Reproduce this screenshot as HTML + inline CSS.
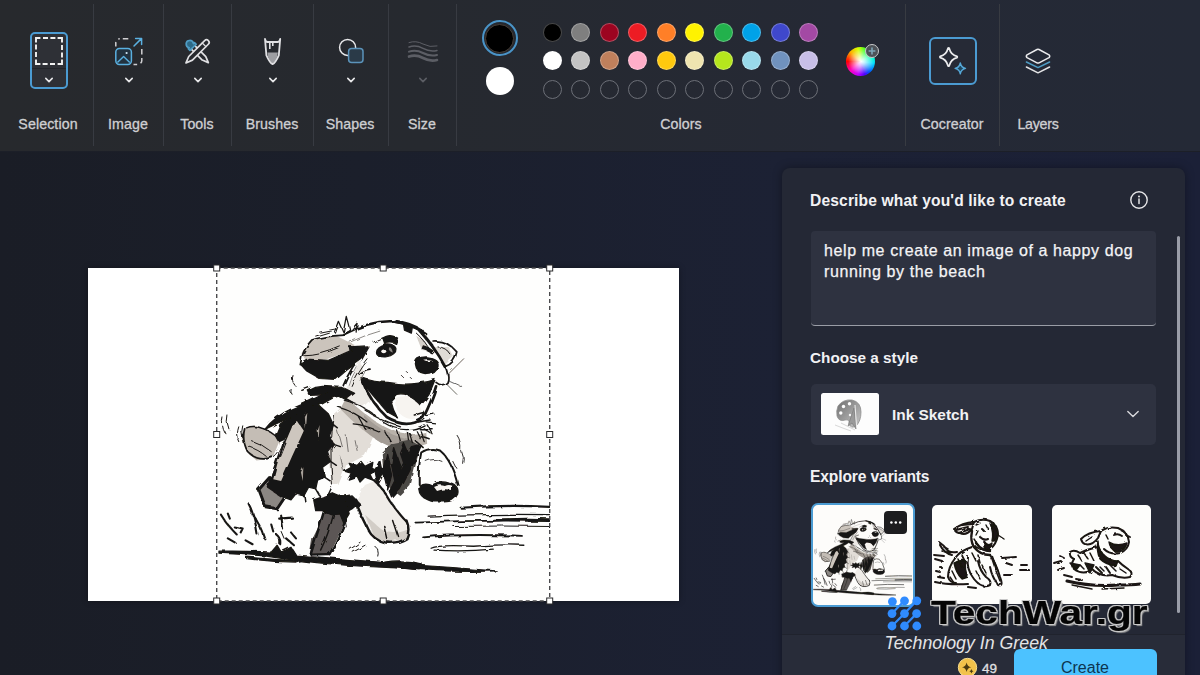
<!DOCTYPE html>
<html lang="en">
<head>
<meta charset="utf-8">
<title>Paint - Cocreator</title>
<style>
*{box-sizing:border-box;margin:0;padding:0}
html,body{width:1200px;height:675px;overflow:hidden}
body{font-family:"Liberation Sans",sans-serif;background:#1a1e2b;color:#d8d8da;position:relative}
.abs{position:absolute}
#work{position:absolute;left:0;top:150px;width:1200px;height:525px;
 background:linear-gradient(90deg,#1a1d26 0%,#1b1f2b 30%,#1c2134 65%,#1b2037 100%)}
#toolbar{position:absolute;left:0;top:0;width:1200px;height:152px;background:linear-gradient(90deg,#27292d 0%,#26292f 35%,#252935 70%,#242936 100%);border-bottom:1px solid #1c1f28}
.sep{position:absolute;top:4px;width:1px;height:142px;background:#383b42}
.lbl{position:absolute;top:115.5px;font-size:14.2px;color:#cfcfd2;text-align:center;width:100px;margin-left:-50px;white-space:nowrap;letter-spacing:0.1px;-webkit-text-stroke:0.3px #cfcfd2}
.chev{position:absolute;width:10px;height:6px}
.pal{position:absolute;width:19px;height:19px;border-radius:50%;margin:-9.5px 0 0 -9.5px;border:1.2px solid rgba(255,255,255,.28)}
.pal.e{background:transparent;border:1.6px solid #6c6f77}
#panel{position:absolute;left:782px;top:168px;width:402.5px;height:520px;background:#242835;border-radius:8px 8px 0 0;box-shadow:0 0 10px rgba(0,0,0,.35)}
.h{position:absolute;font-weight:bold;font-size:15.6px;color:#f2f2f4;white-space:nowrap}
#ta{position:absolute;left:811px;top:231px;width:345px;height:95px;background:#2e3240;border-radius:4px;border-bottom:1.5px solid #9a9da6}
#ta p{position:absolute;left:13px;top:8.5px;font-size:16px;line-height:21.5px;color:#f4f4f6;white-space:nowrap;letter-spacing:.6px;-webkit-text-stroke:.25px #f4f4f6}
#dd{position:absolute;left:811px;top:384px;width:345px;height:61px;background:#2e3240;border-radius:5px}
.var{position:absolute;top:505px;width:100px;height:100px;background:#fdfdfb;border-radius:5px;overflow:hidden}
#create{position:absolute;left:1013.5px;top:649px;width:143px;height:40px;background:#4cc2ff;border-radius:6px;color:#0d3550;font-size:16px;text-align:center;line-height:38px}
</style>
</head>
<body>
<div id="work"></div>
<div id="toolbar">
  <div class="sep" style="left:93px"></div>
  <div class="sep" style="left:163px"></div>
  <div class="sep" style="left:231px"></div>
  <div class="sep" style="left:313px"></div>
  <div class="sep" style="left:388px"></div>
  <div class="sep" style="left:456px"></div>
  <div class="sep" style="left:905px"></div>
  <div class="sep" style="left:999px"></div>
  <div class="lbl" style="left:48px">Selection</div>
  <div class="lbl" style="left:128px">Image</div>
  <div class="lbl" style="left:197px">Tools</div>
  <div class="lbl" style="left:272px">Brushes</div>
  <div class="lbl" style="left:350px">Shapes</div>
  <div class="lbl" style="left:422px">Size</div>
  <div class="lbl" style="left:681px">Colors</div>
  <div class="lbl" style="left:952px">Cocreator</div>
  <div class="lbl" style="left:1038px;letter-spacing:-.25px">Layers</div>
</div>

<!-- Selection button -->
<div class="abs" style="left:30px;top:32px;width:38px;height:57px;border:2px solid #4b9bd2;border-radius:5px;background:#2e3036"></div>
<div class="abs" style="left:32px;top:68px;width:34px;height:1px;background:#23252a"></div>
<svg class="abs" style="left:34px;top:36px" width="30" height="30" viewBox="0 0 30 30"><path fill="none" stroke="#f2f2f2" stroke-width="1.9" d="M2 6.4 V2 H6.4 M9 2 h5 M16.4 2 h5 M23.6 2 H28 V6.4 M28 9 v5 M28 16.4 v5 M28 23.6 V28 H23.6 M21 28 h-5 M13.6 28 h-5 M6.4 28 H2 V23.6 M2 21 v-5 M2 13.6 v-5"/></svg>
<!-- Image icon -->
<svg class="abs" style="left:113px;top:36px" width="32" height="30" viewBox="0 0 32 30">
 <rect x="2.8" y="2.8" width="26" height="25.6" rx="4" fill="none" stroke="#d0cfd2" stroke-width="1.5" stroke-dasharray="5.5 3.6" stroke-dashoffset="-3"/>
 <rect x="17" y="0" width="15" height="12" fill="#27292e"/>
 <rect x="0" y="10.5" width="20.5" height="19.5" fill="#27292e"/>
 <path d="M21 10 L28.4 2.6 M22.6 2.4 H28.6 V8.4" fill="none" stroke="#5ab0e0" stroke-width="1.5" stroke-linecap="round" stroke-linejoin="round"/>
 <rect x="2.8" y="12.4" width="15.6" height="16" rx="3.6" fill="#22323f" stroke="#5ab0e0" stroke-width="1.5"/>
 <path d="M4.4 26.6 L10.6 20.6 L16.8 26.6" fill="none" stroke="#5ab0e0" stroke-width="1.4" stroke-linejoin="round"/>
 <circle cx="13.6" cy="17" r="1.1" fill="#cfe6f5"/>
</svg>
<!-- Tools icon -->
<svg class="abs" style="left:182px;top:36px" width="32" height="31" viewBox="0 0 32 31">
 <g fill="none" stroke-width="1.7" stroke-linejoin="round" stroke-linecap="round">
 <g transform="translate(15.3,15.6) rotate(-45)">
  <path d="M-2.5 -6 V9.5 L0 15.6 L2.5 9.5 V-6" stroke="#e0e0e3" fill="#27292e"/>
  <path d="M-4.4 -6 h8.8 v-2.4 h-1.4 a3.6 3.8 0 1 0 -6 0 h-1.4 z" fill="#2d6a88" stroke="#4f9cc4"/>
 </g>
 <g transform="translate(15.3,15.6) rotate(45)">
  <path d="M-2.6 -13 a2.6 2.6 0 0 1 5.2 0 V9.5 L0 16 L-2.6 9.5 Z" stroke="#e0e0e3" fill="#27292e"/>
  <path d="M-2.6 -9.6 H2.6" stroke="#e0e0e3" stroke-width="1.3"/>
 </g>
 </g>
</svg>
<!-- Brushes icon -->
<svg class="abs" style="left:262px;top:36px" width="22" height="31" viewBox="0 0 22 31">
 <path d="M5.4 16.5 L6 20.5 Q8.4 26.4 10.6 27.6 Q12.8 26.4 15.2 20.5 L15.8 16.5 z" fill="#9d9ea2"/>
 <path d="M3 2.8 q0.4 2.8 2.4 3.2 h10.4 q2 -0.4 2.4 -3.2 L16.8 19.4 Q13.4 27 10.6 28.2 Q7.8 27 4.4 19.4 z" fill="none" stroke="#e0e0e3" stroke-width="1.8" stroke-linejoin="round"/>
 <path d="M7.8 6.4 v6.6 M10.8 6.4 v3.6" stroke="#e0e0e3" stroke-width="1.6" fill="none"/>
</svg>
<!-- Shapes icon -->
<svg class="abs" style="left:337px;top:37px" width="30" height="29" viewBox="0 0 30 29">
 <circle cx="10.6" cy="10.4" r="8" fill="none" stroke="#e8e8ea" stroke-width="1.5"/>
 <rect x="11.6" y="11.6" width="14.4" height="14" rx="3" fill="#2a3a48" stroke="#5b93ba" stroke-width="1.5"/>
</svg>
<!-- Size icon -->
<svg class="abs" style="left:406px;top:38px" width="34" height="26" viewBox="0 0 34 26">
 <g fill="none" stroke="#5c5e65" stroke-linecap="round">
 <path d="M3 4.6 q7 -2.4 14 1.4 t14 2" stroke-width="1"/>
 <path d="M3 9 q7 -2.4 14 1.4 t14 2" stroke-width="1.5"/>
 <path d="M3 13.6 q7 -2.4 14 1.4 t14 2" stroke-width="2"/>
 <path d="M3 18.6 q7 -2.4 14 1.4 t14 2" stroke-width="2.6"/>
 </g>
</svg>
<svg class="abs" style="left:44px;top:76px" width="10" height="8" viewBox="0 0 10 8"><path d="M1.8 2.4 L5 5.6 L8.2 2.4" fill="none" stroke="#e8e8ea" stroke-width="1.6" stroke-linecap="round" stroke-linejoin="round"/></svg><svg class="abs" style="left:123.5px;top:76px" width="10" height="8" viewBox="0 0 10 8"><path d="M1.8 2.4 L5 5.6 L8.2 2.4" fill="none" stroke="#e8e8ea" stroke-width="1.6" stroke-linecap="round" stroke-linejoin="round"/></svg><svg class="abs" style="left:192.7px;top:76px" width="10" height="8" viewBox="0 0 10 8"><path d="M1.8 2.4 L5 5.6 L8.2 2.4" fill="none" stroke="#e8e8ea" stroke-width="1.6" stroke-linecap="round" stroke-linejoin="round"/></svg><svg class="abs" style="left:267.6px;top:76px" width="10" height="8" viewBox="0 0 10 8"><path d="M1.8 2.4 L5 5.6 L8.2 2.4" fill="none" stroke="#e8e8ea" stroke-width="1.6" stroke-linecap="round" stroke-linejoin="round"/></svg><svg class="abs" style="left:346.3px;top:76px" width="10" height="8" viewBox="0 0 10 8"><path d="M1.8 2.4 L5 5.6 L8.2 2.4" fill="none" stroke="#e8e8ea" stroke-width="1.6" stroke-linecap="round" stroke-linejoin="round"/></svg><svg class="abs" style="left:417.7px;top:76px" width="10" height="8" viewBox="0 0 10 8"><path d="M1.8 2.4 L5 5.6 L8.2 2.4" fill="none" stroke="#5c5e65" stroke-width="1.6" stroke-linecap="round" stroke-linejoin="round"/></svg>
<!-- Cocreator -->
<div class="abs" style="left:928.5px;top:36.5px;width:48px;height:48.5px;border:2px solid #4b9bd2;border-radius:6px;background:#262a36"></div>
<svg class="abs" style="left:936px;top:45px" width="34" height="32" viewBox="0 0 34 32">
 <path d="M12.6 3.2 q0.6 -0.6 1.2 0 q1.6 6.6 7.8 8.2 q0.6 0.6 0 1.2 q-6.2 1.6 -7.8 8.2 q-0.6 0.6 -1.2 0 q-1.6 -6.6 -7.8 -8.2 q-0.6 -0.6 0 -1.2 q6.2 -1.6 7.8 -8.2 z" transform="translate(-0.6,0)" fill="none" stroke="#ececee" stroke-width="1.7" stroke-linejoin="round"/>
 <path d="M24.3 18 q0.8 4.4 5.2 5.4 q-4.4 1 -5.2 5.4 q-0.8 -4.4 -5.2 -5.4 q4.4 -1 5.2 -5.4 z" fill="#1f4860" stroke="#56a8d8" stroke-width="1.4" stroke-linejoin="round"/>
</svg>
<!-- Layers -->
<svg class="abs" style="left:1023px;top:46px" width="30" height="30" viewBox="0 0 30 30">
 <g fill="none" stroke-width="1.5" stroke-linejoin="round" stroke-linecap="round">
 <path d="M3.4 21 L15 26.8 L26.6 21" stroke="#e4e4e6"/>
 <path d="M3.4 16 L15 21.6 L26.6 16" stroke="#4f9cc4"/>
 <path d="M14 3.5 q1 -0.5 2 0 L26 8.8 q1.4 1.4 0 2.8 L16 16.8 q-1 0.5 -2 0 L4 11.6 q-1.4 -1.4 0 -2.8 z" stroke="#ececee"/>
 </g>
</svg>

<!-- palette -->
<div class="abs" style="left:481.5px;top:20px;width:36px;height:36px;border-radius:50%;border:2.2px solid #4a94c8;background:#25282f"></div>
<div class="abs" style="left:485px;top:23.5px;width:29px;height:29px;border-radius:50%;background:#000;border:1px solid #4a4038"></div>
<div class="abs" style="left:485.5px;top:67px;width:28px;height:28px;border-radius:50%;background:#fff"></div>
<div class="pal" style="left:552.0px;top:32px;background:#000000"></div><div class="pal" style="left:552.0px;top:60.5px;background:#ffffff"></div><div class="pal e" style="left:552.0px;top:89px"></div>
<div class="pal" style="left:580.5px;top:32px;background:#7f7f7f"></div><div class="pal" style="left:580.5px;top:60.5px;background:#c3c3c3"></div><div class="pal e" style="left:580.5px;top:89px"></div>
<div class="pal" style="left:609.0px;top:32px;background:#9c0420"></div><div class="pal" style="left:609.0px;top:60.5px;background:#c0805c"></div><div class="pal e" style="left:609.0px;top:89px"></div>
<div class="pal" style="left:637.5px;top:32px;background:#ed1c24"></div><div class="pal" style="left:637.5px;top:60.5px;background:#ffaec9"></div><div class="pal e" style="left:637.5px;top:89px"></div>
<div class="pal" style="left:666.0px;top:32px;background:#ff7f27"></div><div class="pal" style="left:666.0px;top:60.5px;background:#ffc90e"></div><div class="pal e" style="left:666.0px;top:89px"></div>
<div class="pal" style="left:694.5px;top:32px;background:#fff200"></div><div class="pal" style="left:694.5px;top:60.5px;background:#efe4b0"></div><div class="pal e" style="left:694.5px;top:89px"></div>
<div class="pal" style="left:723.0px;top:32px;background:#22b14c"></div><div class="pal" style="left:723.0px;top:60.5px;background:#b5e61d"></div><div class="pal e" style="left:723.0px;top:89px"></div>
<div class="pal" style="left:751.5px;top:32px;background:#00a2e8"></div><div class="pal" style="left:751.5px;top:60.5px;background:#99d9ea"></div><div class="pal e" style="left:751.5px;top:89px"></div>
<div class="pal" style="left:780.0px;top:32px;background:#3f48cc"></div><div class="pal" style="left:780.0px;top:60.5px;background:#7092be"></div><div class="pal e" style="left:780.0px;top:89px"></div>
<div class="pal" style="left:808.5px;top:32px;background:#a349a4"></div><div class="pal" style="left:808.5px;top:60.5px;background:#c8bfe7"></div><div class="pal e" style="left:808.5px;top:89px"></div>
<div class="abs" style="left:846px;top:47px;width:29px;height:29px;border-radius:50%;background:radial-gradient(circle at 52% 50%,#fff 0%,rgba(255,255,255,.75) 18%,rgba(255,255,255,0) 62%),conic-gradient(from 270deg,#ff0000,#ffb000 12%,#d8ff00 22%,#30ff30 32%,#00ffc0 44%,#00e0ff 52%,#0050ff 64%,#5000ff 70%,#c000ff 78%,#ff00c0 88%,#ff0000)"></div>
<div class="abs" style="left:865px;top:44px;width:14px;height:14px;border-radius:50%;background:#4d5258;border:1.5px solid #c9c9cb"></div>
<svg class="abs" style="left:865px;top:44px" width="14" height="14" viewBox="0 0 14 14"><path d="M7 3.6 V10.4 M3.6 7 H10.4" stroke="#7fa6b8" stroke-width="1.6" fill="none"/></svg>

<!-- canvas -->
<div class="abs" style="left:88px;top:268px;width:590.7px;height:332.5px;background:#fff;box-shadow:0 0 6px rgba(0,0,0,.35)"></div>
<div class="abs" style="left:216.7px;top:268px;width:333px;height:333px;background:#fefefd"></div>
<!--DOG-START--><svg id="dog" class="abs" style="left:216.7px;top:268px" width="333" height="333" viewBox="0 0 675 675">
<defs><filter id="rough" x="-2%" y="-2%" width="104%" height="104%"><feTurbulence type="fractalNoise" baseFrequency="0.035" numOctaves="3" seed="7"/><feDisplacementMap in="SourceGraphic" scale="9"/></filter></defs>
<g id="dogg" filter="url(#rough)" stroke-linecap="round" stroke-linejoin="round">
<!-- washes -->
<g stroke="none">
 <path d="M171 173 L193 144 L241 137 L279 156 L270 168 L222 185 L183 190 Z" fill="#cbc4bc"/>
 <path d="M55 325 L78 318 L112 335 L126 352 L112 386 L80 390 L60 372 L50 345 Z" fill="#c4bdb5"/>
 
 <path d="M236 300 L262 278 L300 300 L322 330 L300 380 L262 400 L246 440 L232 440 L226 380 Z" fill="#e2ddd7"/>
 <path d="M262 262 Q300 300 340 322 Q380 344 424 332 L426 356 Q380 374 330 352 Q290 328 250 286 Z" fill="#b9b2aa"/><path d="M300 300 Q340 340 400 350 L392 372 Q340 366 300 330 Z" fill="#a39c95"/>
 <path d="M85 449 L106 425 L145 452 L121 488 L97 483 Z" fill="#8b8783"/>
 <path d="M217 493 L270 488 L250 531 L226 579 L188 582 L193 550 L212 512 Z" fill="#5b5754"/>
 <path d="M254 262 L290 186 L298 230 L316 262 L296 282 Z" fill="#ebe8e4"/>
 <path d="M440 160 L470 160 L480 180 L462 196 Z" fill="#e0dcd6"/><path d="M404 138 L420 146 L432 170 L416 168 Z" fill="#d5d0ca"/>
 <path d="M282 470 L300 440 L320 432 L352 474 L385 513 L384 548 L345 556 L318 546 L300 510 Z" fill="#efece8"/>
 <path d="M300 500 L318 546 L345 556 L384 548 L386 530 Q350 548 322 520 Z" fill="#d2cdc7"/>
</g>
<!-- black masses -->
<g fill="#181513" stroke="#181513" stroke-width="2.5">
 <!-- under ear -->
 <path d="M169 195 L188 185 L226 187 L270 168 L308 160 L294 185 L262 208 L241 226 L207 224 L183 210 Z"/>
 <!-- neck fur -->
 <path d="M183 247 L198 240 L212 238 L250 240 L279 254 L262 267 L244 258 L226 264 L202 272 L212 257 L188 258 Z"/>
 <!-- back-of-neck stroke -->
 <path d="M234 264 Q190 290 146 304 Q118 316 96 328 Q118 300 150 286 Q190 270 222 252 Z"/>
 <!-- back spiky mass -->
 <path d="M150 300 L176 282 L204 276 L226 296 L236 318 L228 340 L236 356 L224 372 L230 392 L214 404 L218 424 L204 430 L200 448 L186 444 L176 462 L160 458 L150 470 L128 462 L104 446 L112 415 L132 370 L145 330 Z"/>
 <path d="M150 300 L128 316 L118 340 L124 350 L150 338 Z"/>
 <!-- belly diagonal -->
 <path d="M334 376 L352 358 L392 350 L412 362 L400 410 L392 442 L372 462 L350 446 L338 420 Z" fill="#4c4845" stroke="none"/>
 <path d="M414 360 L400 392 L384 424 L372 448 L356 466 L350 452 L366 420 L380 392 L396 364 Z"/>
 <path d="M344 376 L354 420 L346 450 L336 410 Z M360 366 L372 400 L362 440 L354 400 Z M330 390 L336 420 L326 440 L320 410 Z M380 356 L390 380 L380 400 L372 376 Z"/>
 <!-- chest mark -->
 <path d="M258 412 L272 404 L268 396 L284 400 L292 392 L300 402 L316 394 L314 406 L324 410 L310 418 L316 430 L300 424 L290 434 L284 422 L266 428 L272 416 Z"/>
 <!-- knee blob -->
 <path d="M196 470 L214 464 L232 456 L250 464 L272 460 L290 478 L276 490 L262 498 L232 500 L214 492 L200 492 Z"/>
 <path d="M250 462 L262 470 L270 500 L258 520 L250 500 Z"/>
 <!-- mouth -->
 <path d="M292 222 Q320 232 346 232 Q380 238 405 234 Q426 232 442 226 L430 256 L420 270 L406 286 L400 266 Q384 252 364 256 L352 268 L358 288 L366 304 L346 293 L317 259 L296 234 Z"/>
 <!-- nose -->
 <path d="M402 194 Q402 180 424 180 Q450 182 448 200 Q444 216 424 216 Q404 214 402 194 Z"/>
 <!-- eye -->
 <ellipse cx="342" cy="167" rx="21" ry="13" transform="rotate(-8 342 167)"/>
 <path d="M336 142 Q350 132 366 142 L362 153 Q350 147 340 153 Z"/>
 <path d="M268 160 L304 158 L302 166 L270 168 Z"/>
 <path d="M378 114 L396 120 L394 132 L380 126 Z"/>
 <path d="M418 158 Q428 160 438 168 L434 172 Q426 166 416 164 Z"/>
 <!-- paw pads raised -->
 <path d="M410 440 Q420 432 436 440 Q452 430 470 436 Q492 440 488 458 Q480 476 456 474 Q436 476 420 466 Q406 456 410 440 Z"/>
 <!-- ground -->
 <path d="M4 574 Q60 573 110 576 L122 562 L130 576 L150 566 L160 582 Q260 590 385 601 Q480 607 566 614 Q470 617 385 609 Q300 606 232 600 Q150 592 100 584 Q50 580 4 578 Z"/>
 <path d="M60 586 Q120 592 170 592 L160 596 Q110 596 60 589 Z"/>
 <path d="M340 596 Q380 590 416 600 L412 612 L350 606 Z"/>
</g>
<!-- rear leg dark outline pieces -->
<g fill="none" stroke="#181513">
 <path d="M84 450 L106 425 M86 452 L98 484 L122 488 L146 452" stroke-width="6"/>
 <path d="M108 427 L144 452" stroke-width="3"/>
 <path d="M150 300 Q136 350 104 440" stroke-width="4"/>
 <path d="M217 493 Q206 530 190 580 M268 490 Q256 530 228 580 M190 581 L226 580" stroke-width="5"/>
 <path d="M236 500 Q226 540 210 572" stroke-width="3"/>
</g>
<!-- white details inside black -->
<g fill="#f7f4f0" stroke="none">
 <path d="M164 312 L176 330 L152 382 L130 432 L114 428 L124 390 L140 350 L153 320 Z" fill="#cdc6be"/>
 <path d="M360 264 Q384 254 400 268 Q418 282 417 297 Q404 310 384 304 Q366 296 362 280 Z"/>
 <ellipse cx="338" cy="169" rx="5" ry="4"/><path d="M350 160 Q356 164 356 172 Q350 170 348 164 Z" fill="#8a8682"/>
 <path d="M440 444 Q450 438 462 442 Q470 438 478 442 L474 450 Q460 446 446 452 Z"/>
 <path d="M418 186 Q426 183 436 187 Q426 191 418 186 Z"/>
 <path d="M176 300 L181 292 L178 326 Z M204 330 L208 318 L206 350 Z M170 414 L175 404 L174 432 Z" fill="#a8a29b"/>
</g>
<!-- outlines -->
<g fill="none" stroke="#181513">
 <!-- head top -->
 <path d="M258 134 Q312 106 356 108 Q398 114 424 134" stroke-width="5"/>
 <path d="M360 108 Q392 112 416 128" stroke-width="7"/>
 <path d="M410 126 Q440 158 462 200" stroke-width="6"/><path d="M462 198 Q472 222 466 232 Q456 242 444 232" stroke-width="3.5"/>
 <path d="M438 148 Q466 146 486 170 Q482 194 462 200" stroke-width="3.5"/>
 <path d="M448 160 Q464 160 474 176" stroke-width="2"/>
 <path d="M404 132 Q424 150 432 168" stroke-width="2"/>
 <!-- ear outline -->
 <path d="M258 136 Q214 138 192 146 Q172 166 169 196" stroke-width="3.5"/>
 <path d="M176 178 Q210 178 250 160" stroke-width="2"/>
 <!-- tufts -->
 <path d="M238 130 L246 108 L256 130 L262 98 L270 128 L284 112 L282 130" stroke-width="2.5"/>
 <path d="M200 138 L226 130 M208 130 L238 124" stroke-width="2"/>
 <!-- cheek lines -->
 <path d="M296 172 Q272 200 256 238" stroke-width="3.5"/>
 <path d="M304 184 Q284 208 272 238" stroke-width="2"/>
 <path d="M282 200 Q270 220 266 236 M300 210 L290 228" stroke-width="1.5" stroke="#6e6a66"/>
 <path d="M288 214 Q298 206 310 205" stroke-width="4"/>
 <!-- lower jaw -->
 <path d="M296 232 Q310 270 346 304 Q386 328 418 304 Q436 268 444 240" stroke-width="5.5"/>
 <path d="M336 312 Q380 340 420 318" stroke-width="2.5"/>
 <!-- chin fur -->
 <path d="M420 300 L440 296 M424 312 L442 314 M418 324 L432 334 M404 330 L412 346 M388 334 L390 350" stroke-width="2.5"/>
 <path d="M402 300 L424 294 M408 312 L432 308 M410 326 L436 326 M412 340 L430 346 M404 352 L418 364" stroke-width="3"/>
 <!-- whiskers -->
 <path d="M468 216 L500 184 M470 228 L496 240 M466 236 L486 256" stroke-width="1.3"/>
 <path d="M384 210 L386 212 M376 220 L378 222 M392 222 L394 224" stroke-width="2"/>
 <!-- neck/chest fur strokes -->
 <path d="M258 268 Q290 276 322 300 M246 282 Q280 292 304 312 M276 316 Q300 318 330 332 M286 300 L300 326" stroke-width="2.5"/>
 <path d="M300 288 Q330 310 372 322 M340 330 L352 352 M366 330 L372 352 M392 336 L398 356 M412 330 L420 352 M426 318 L438 338" stroke-width="2.5"/>
 <path d="M154 218 Q150 228 158 238 M148 244 Q146 250 150 254" stroke-width="2"/>
 <!-- shoulder shading -->
 <path d="M244 330 L252 360 M262 340 L266 372 M250 380 L256 410 M280 350 L284 370" stroke-width="1.6" stroke="#5e5a57"/>
 <!-- extra fur -->
 <path d="M236 318 L246 326 M236 356 L248 360 M230 392 L242 400 M218 424 L230 432 M200 448 L208 462 M176 458 L178 472 M150 436 L140 446" stroke-width="3"/>
 <path d="M186 240 L170 246 M200 270 L188 282 M262 266 L276 274" stroke-width="3"/>
 <path d="M318 150 Q330 140 344 142" stroke-width="2"/>
 <path d="M270 150 Q300 136 330 128" stroke-width="1.6" stroke="#6e6a66"/>
 <!-- tail outline -->
 <path d="M56 326 Q50 350 62 372 Q82 394 112 384" stroke-width="3.5"/>
 <path d="M60 324 Q86 314 124 344" stroke-width="3"/>
 <path d="M70 350 Q90 356 110 372 M64 362 Q84 368 100 382" stroke-width="2"/>
 <path d="M112 384 Q128 372 132 352" stroke-width="2"/>
 <!-- tail motion lines -->
 <path d="M12 304 Q8 320 16 334 M22 300 Q18 314 24 326 M44 322 Q38 338 46 354 M52 320 Q48 332 52 344" stroke-width="2"/>
 <!-- front near leg -->
 <path d="M280 468 Q290 500 306 530 Q318 552 340 556 Q366 560 384 548 Q392 530 384 512" stroke-width="5"/>
 <path d="M318 430 Q336 446 352 474 Q370 500 384 514" stroke-width="4.5"/>
 <path d="M338 522 L344 548 M358 514 L368 544" stroke-width="3"/>
 <path d="M262 470 Q256 500 262 524" stroke-width="2"/>
 <!-- front far leg -->
 <path d="M409 438 Q408 400 414 374 Q432 362 452 370 Q476 390 488 440" stroke-width="4"/>
 <path d="M424 392 Q440 384 456 392" stroke-width="1.6"/>
 <!-- paw motion lines -->
 <path d="M486 338 Q496 352 494 370 M496 372 Q502 384 498 396 M478 392 L484 404" stroke-width="1.8"/>
 <!-- body outline belly -->
 <path d="M238 300 Q226 360 234 440" stroke-width="2"/>
 <path d="M232 446 Q220 470 214 490" stroke-width="3"/>
 <!-- ground streaks -->
 <path d="M494 486 Q580 480 674 484" stroke-width="4.5"/>
 <path d="M428 503 Q540 498 674 500" stroke-width="2.6"/>
 <path d="M402 516 Q540 510 674 513" stroke-width="3.4"/>
 <path d="M560 511 Q620 508 674 510" stroke-width="5.5"/>
 <path d="M480 524 Q580 522 674 524" stroke-width="2"/>
 <path d="M418 546 Q500 538 618 543" stroke-width="4"/>
 <path d="M434 568 Q450 560 520 564 Q580 560 622 562 M440 572 Q500 576 560 570" stroke-width="2.6"/>
 <!-- splashes -->
 <path d="M22 498 L26 508 M34 524 L52 528 L48 536 M64 478 Q76 500 82 540 M72 500 Q88 520 96 548 M130 502 L134 530 M126 508 L152 506 M110 520 L114 534 M150 536 L160 548 M140 548 L156 562 M22 548 L36 556 M58 552 L72 560 M8 500 Q20 520 40 540 M120 540 Q130 548 128 560" stroke-width="4.2"/>
 <path d="M318 562 Q330 572 326 584 M270 570 L290 556 M276 576 L300 562 M130 534 L136 548" stroke-width="2"/>
</g>
</g>
</svg>
<!--DOG-END-->
<svg class="abs" style="left:210px;top:262px" width="346" height="346" viewBox="210 262 346 346">
 <rect x="216.7" y="268" width="333" height="333" fill="none" stroke="#4a4a4c" stroke-width="1.4" stroke-dasharray="4 3"/>
 <g fill="#fff" stroke="#2a2a2c" stroke-width="1">
  <rect x="213.7" y="265" width="6" height="6"/><rect x="380.2" y="265" width="6" height="6"/><rect x="546.7" y="265" width="6" height="6"/>
  <rect x="213.7" y="431.5" width="6" height="6"/><rect x="546.7" y="431.5" width="6" height="6"/>
  <rect x="213.7" y="598" width="6" height="6"/><rect x="380.2" y="598" width="6" height="6"/><rect x="546.7" y="598" width="6" height="6"/>
 </g>
</svg>

<div id="panel"></div>
<div class="h" style="left:810px;top:192px;letter-spacing:.15px">Describe what you'd like to create</div>
<div id="ta"><p>help me create an image of a happy dog<br>running by the beach</p></div>
<div class="h" style="left:810px;top:349px;font-size:15.3px">Choose a style</div>
<div id="dd"></div>
<!-- info icon -->
<svg class="abs" style="left:1128.8px;top:189.5px" width="20" height="20" viewBox="0 0 20 20"><circle cx="10" cy="10" r="8.2" fill="none" stroke="#e6e6e8" stroke-width="1.4"/><path d="M10 9 V13.6" stroke="#e6e6e8" stroke-width="1.5" stroke-linecap="round"/><circle cx="10" cy="6.4" r="1" fill="#e6e6e8"/></svg>
<!-- scrollbar -->
<div class="abs" style="left:1177px;top:236px;width:2.6px;height:377px;background:#9a9da8;border-radius:2px"></div>
<!-- style dropdown content -->
<div class="abs" style="left:821.2px;top:392.7px;width:57.4px;height:42.4px;background:#fdfdfd;border-radius:2.5px;overflow:hidden">
 <svg width="58" height="43" viewBox="0 0 58 43"><defs><linearGradient id="pg" x1="0" y1="0" x2="1" y2="1"><stop offset="0" stop-color="#6f6f6f"/><stop offset="1" stop-color="#c9c9c9"/></linearGradient></defs>
  <path d="M17 13 Q22 6 31 7 Q40 9 40 19 Q40 28 35 33 Q30 36 28 31 Q29 26 24 27 Q18 29 16 23 Q15 18 17 13 Z" fill="url(#pg)" stroke="#8e8e8e" stroke-width="0.8"/>
  <path d="M33 15 L35 36 L31 30 L27 33 Z" fill="#9a9a9a" stroke="#777" stroke-width="0.6"/>
  <path d="M34 12 L35.6 34" stroke="#e9e9e9" stroke-width="1.1"/>
  <circle cx="22.5" cy="13.5" r="1.7" fill="#fff"/><circle cx="28.5" cy="10.8" r="1.7" fill="#fff"/><circle cx="19.8" cy="20" r="1.7" fill="#fff"/><circle cx="29" cy="22" r="1.2" fill="#f4f4f4"/>
  <path d="M14 32 Q24 36 30 38 M20 30 L34 37" stroke="#d8d8d8" stroke-width="1" fill="none"/>
 </svg>
</div>
<div class="abs" style="left:892px;top:406.2px;font-size:15.4px;font-weight:bold;color:#f2f2f4;white-space:nowrap">Ink Sketch</div>
<svg class="abs" style="left:1126px;top:409px" width="14" height="10" viewBox="0 0 14 10"><path d="M1.8 2.4 L7 7.6 L12.2 2.4" fill="none" stroke="#d8d8dc" stroke-width="1.4" stroke-linecap="round" stroke-linejoin="round"/></svg>

<div class="h" style="left:810px;top:468px;letter-spacing:-.12px">Explore variants</div>

<!-- variants -->
<div class="abs" style="left:811px;top:502.5px;width:104px;height:104px;border:2.8px solid #4b9bd2;border-radius:7px;background:#fdfcfa;overflow:hidden">
 <svg class="abs" style="left:0;top:0" width="99" height="99" viewBox="0 0 675 675"><use href="#dogg"/></svg>
</div>
<div class="abs" style="left:883.5px;top:511px;width:23.5px;height:22.5px;background:#1d1d1f;border-radius:4px"></div>
<svg class="abs" style="left:883.5px;top:511px" width="24" height="23" viewBox="0 0 24 23"><circle cx="7.4" cy="11.4" r="1.25" fill="#fff"/><circle cx="11.8" cy="11.4" r="1.25" fill="#fff"/><circle cx="16.2" cy="11.4" r="1.25" fill="#fff"/></svg>
<div class="var" style="left:932.2px;top:504.6px;width:99.8px;height:99.6px">
<svg width="100" height="100" viewBox="0 0 100 100"><defs><filter id="rough2" x="-5%" y="-5%" width="110%" height="110%"><feTurbulence type="fractalNoise" baseFrequency="0.18" numOctaves="2" seed="4"/><feDisplacementMap in="SourceGraphic" scale="2.6"/></filter></defs><g filter="url(#rough2)" fill="none" stroke="#1a1512" stroke-linecap="round" stroke-linejoin="round">
 <path d="M22 24 Q30 18 42 17 L40 24 Q34 31 28 28 Q24 28 22 24 Z" fill="#f3efe9" stroke-width="2.0"/>
 <path d="M24 25 L36 22 M27 28 L38 24 M30 20 L40 19" stroke-width="2.0"/>
 <path d="M42 17 Q50 13 58 16 Q66 20 66 30 Q64 40 58 44 Q50 46 44 42" stroke-width="2.0"/>
 <path d="M58 18 Q66 22 66 30 Q64 37 60 36 Q62 28 58 18 Z" fill="#1a1512" stroke-width="1.4"/>
 <path d="M50 24 L52 26 M48 32 Q52 36 56 34" stroke-width="2.1"/>
 <path d="M52 36 Q56 42 60 38 L58 46 Q54 47 52 42 Z" fill="#1a1512" stroke-width="1.4"/>
 <path d="M66 30 L72 34" stroke-width="1.4"/>
 <path d="M40 26 Q38 36 42 42 Q48 50 58 50 M44 38 Q50 46 58 46" stroke-width="2.4"/>
 <path d="M7 37 Q12 40 16 46 Q20 48 25 47 M8 40 Q12 48 20 50" stroke-width="2.0"/>
 <path d="M40 42 Q28 46 24 52 Q16 62 16 72 Q18 78 24 78" stroke-width="2.0"/>
 <path d="M22 58 Q24 68 30 74 L36 72 Q32 64 34 56 Q28 54 22 58 Z" fill="#1a1512" stroke-width="1.4"/>
 <path d="M36 52 Q34 64 42 74 Q50 84 58 80 Q60 76 54 72 Q48 66 46 56" stroke-width="2.0"/>
 <path d="M58 50 Q64 58 68 72 Q72 82 66 80 Q60 72 58 62" stroke-width="2.0"/>
 <path d="M60 52 L64 64" stroke-width="2.6"/>
 <path d="M2 50 L12 51 M3 54 L10 56 M70 53 L84 52 M74 58 L80 60 M89 60 L95 60 M88 65 L97 65 M72 70 L80 70" stroke-width="1.9"/>
 <path d="M3 77 Q16 80 36 79 M4 66 L8 67 M6 72 L12 73 M36 82 L44 83 M8 62 L10 63" stroke-width="2.0"/>
 <path d="M26 54 L30 62 M30 50 L34 58 M20 66 L24 74 M40 48 L44 56 M46 50 L48 58 M62 56 L66 66 M64 66 L68 76 M50 60 L54 68 M44 66 L48 74 M18 72 L22 78" stroke-width="1.5"/>
 <path d="M44 20 L48 18 M46 26 L44 30 M54 20 L56 24 M42 34 L46 40" stroke-width="1.4"/>
 <path d="M12 42 L16 44 M10 46 L18 48" stroke-width="1.6"/>
</g></svg>
</div>
<div class="var" style="left:1051.5px;top:504.8px;width:99.6px;height:98.8px">
<svg width="100" height="99" viewBox="0 0 100 99"><g filter="url(#rough2)" fill="none" stroke="#1a1512" stroke-linecap="round" stroke-linejoin="round">
 <path d="M29 34 Q36 27 49 26 L46 33 Q40 41 33 39 Q30 38 29 34 Z" stroke-width="2.0"/>
 <path d="M49 26 Q56 21 66 23 Q76 27 77 37 Q76 45 68 48 Q58 50 52 44" stroke-width="2.0"/>
 <path d="M57 37 Q65 42 75 38 Q73 47 64 47 Q58 44 57 37 Z" fill="#1a1512" stroke-width="1.4"/>
 <path d="M62 30 Q66 28 70 31 M74 30 L78 32" stroke-width="1.9"/>
 <path d="M46 36 Q46 44 52 50 Q58 56 66 56 L64 61 Q54 60 48 54 Q44 46 46 36 Z" fill="#1a1512" stroke-width="1.4"/>
 <path d="M18 47 Q22 44 28 48 Q36 44 46 42 M18 47 Q17 52 22 54" stroke-width="2.0"/>
 <path d="M22 54 Q18 60 22 64 Q30 70 38 66" stroke-width="2.0"/>
 <path d="M33 58 L38 68 L42 60 Z M18 58 L28 60 L24 65 Z" fill="#1a1512" stroke-width="1.4"/>
 <path d="M40 64 Q48 72 60 70 Q70 74 78 72 Q82 68 76 64 Q70 60 66 56" stroke-width="2.0"/>
 <path d="M44 62 L50 68 M54 62 L58 68" stroke-width="2.0"/>
 <path d="M15 76 Q40 82 66 80 Q80 80 88 79" stroke-width="3.1"/>
 <path d="M2 58 L9 56 M6 65 L12 63 M8 51 L12 53 M12 70 L20 72 M24 74 L30 75" stroke-width="1.9"/>
 <path d="M26 50 L30 56 M32 48 L36 54 M38 48 L42 56 M28 60 L32 64 M48 62 L52 66 M58 60 L64 66 M68 64 L74 68 M34 36 L40 32 M54 30 L56 34" stroke-width="1.5"/>
 <path d="M20 80 L40 84 M50 84 L72 83" stroke-width="1.4"/>
</g></svg>
</div>
<!-- bottom bar -->
<div class="abs" style="left:782px;top:634px;width:402.5px;height:41px;background:#282c39;border-top:1px solid #20232d"></div>
<svg class="abs" style="left:957px;top:657px" width="21" height="21" viewBox="0 0 21 21"><circle cx="10.5" cy="10.5" r="9.2" fill="#f2c24a" stroke="#f7dc8c" stroke-width="1"/><path d="M9.6 5.4 q0.7 4 4.6 4.8 q-3.9 0.8 -4.6 4.8 q-0.7 -4 -4.6 -4.8 q3.9 -0.8 4.6 -4.8 z M14.4 12 q0.4 1.8 2 2.2 q-1.6 0.4 -2 2.2 q-0.4 -1.8 -2 -2.2 q1.6 -0.4 2 -2.2 z" fill="#4a3a10"/></svg>
<div class="abs" style="left:982px;top:661px;font-size:13.5px;color:#e0e0e2;-webkit-text-stroke:.3px #e0e0e2">49</div>

<div id="create">Create</div>

<!-- watermark -->
<svg class="abs" style="left:884px;top:593px" width="42" height="42" viewBox="0 0 42 42">
 <g stroke="#2f8bff" stroke-width="2.2" fill="none"><path d="M8.4 8.4 L8.4 8.4 M20.5 7.6 L8 20.6 M32.8 7.6 L20.5 20.6 L8 33 M32.6 20.6 L20.5 33"/></g>
 <g fill="#2f8bff"><circle cx="8.4" cy="8.6" r="4.4"/><circle cx="20.5" cy="7.8" r="4.4"/><circle cx="32.8" cy="7.8" r="4.4"/><circle cx="8" cy="20.6" r="4.4"/><circle cx="20.5" cy="20.6" r="4.4"/><circle cx="32.6" cy="20.6" r="4.4"/><circle cx="8" cy="33" r="4.4"/><circle cx="20.5" cy="33" r="4.4"/><circle cx="32.8" cy="33" r="4.4"/></g>
</svg>
<div class="abs" id="tw" style="left:931px;top:593.5px;font-size:33px;font-weight:bold;color:#050505;white-space:nowrap;transform-origin:0 0;transform:scaleX(1.23);line-height:38px;-webkit-text-stroke:0.2px #000;text-shadow:1px 0 0 #c8c8c8,-1px 0 0 #c8c8c8,0 1px 0 #c8c8c8,0 -1px 0 #c8c8c8,1px 1px 0 #bdbdbd,-1px -1px 0 #bdbdbd,1px -1px 0 #bdbdbd,-1px 1px 0 #bdbdbd,1.6px 1.6px 1px #999">TechWar.gr</div>
<div class="abs" id="tig" style="left:884.5px;top:633px;font-size:17.8px;font-style:italic;color:#e4e4e6;white-space:nowrap;line-height:21px">Technology In Greek</div>

</body>
</html>
